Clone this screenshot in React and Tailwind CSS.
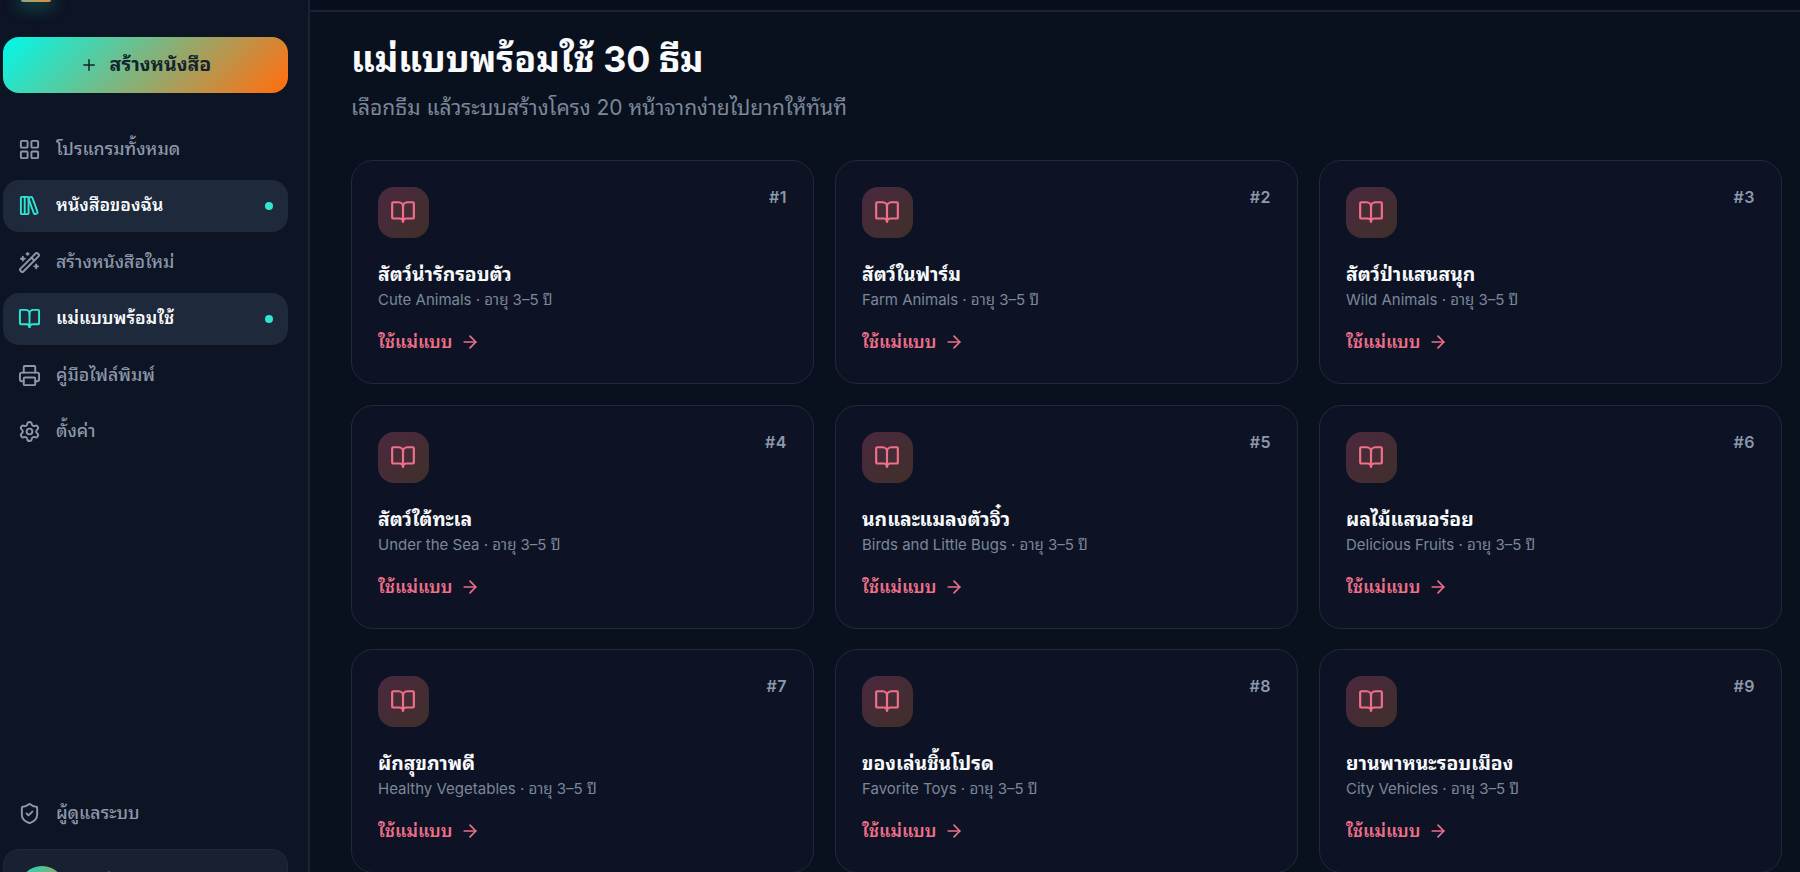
import {
  ArrowRight,
  BookOpen,
  LayoutGrid,
  LibraryBig,
  Plus,
  Printer,
  Settings,
  ShieldCheck,
  WandSparkles
} from "lucide-react";
import clsx from "clsx";

const NAV_ITEMS = [
  { label: "โปรแกรมทั้งหมด", icon: LayoutGrid },
  { label: "หนังสือของฉัน", icon: LibraryBig, active: true },
  { label: "สร้างหนังสือใหม่", icon: WandSparkles },
  { label: "แม่แบบพร้อมใช้", icon: BookOpen, active: true },
  { label: "คู่มือไฟล์พิมพ์", icon: Printer },
  { label: "ตั้งค่า", icon: Settings }
];

const THEMES = [
  { title: "สัตว์น่ารักรอบตัว", subtitle: "Cute Animals" },
  { title: "สัตว์ในฟาร์ม", subtitle: "Farm Animals" },
  { title: "สัตว์ป่าแสนสนุก", subtitle: "Wild Animals" },
  { title: "สัตว์ใต้ทะเล", subtitle: "Under the Sea" },
  { title: "นกและแมลงตัวจิ๋ว", subtitle: "Birds and Little Bugs" },
  { title: "ผลไม้แสนอร่อย", subtitle: "Delicious Fruits" },
  { title: "ผักสุขภาพดี", subtitle: "Healthy Vegetables" },
  { title: "ของเล่นชิ้นโปรด", subtitle: "Favorite Toys" },
  { title: "ยานพาหนะรอบเมือง", subtitle: "City Vehicles" }
];

function NavItem({ label, icon: Icon, active }) {
  return (
    <a
      className={clsx(
        "flex h-[52px] items-center gap-[15px] rounded-2xl px-[15px] text-[17.7px] whitespace-nowrap",
        active ? "bg-[#1e293b] font-semibold text-slate-50" : "font-medium text-[#8c98ab]"
      )}
    >
      <Icon className={clsx("h-[23px] w-[23px] shrink-0", active && "text-[#2fe6d2]")} />
      <span className="flex-1">{label}</span>
      {active ? <span className="h-2 w-2 rounded-full bg-[#2fe6d2]" /> : null}
    </a>
  );
}

function ThemeCard({ number, title, subtitle }) {
  return (
    <article className="h-[224px] rounded-[22px] border border-[#1f2a3a] bg-[#0d1324] p-[26px]">
      <div className="flex items-start justify-between">
        <div className="flex h-[51px] w-[51px] items-center justify-center rounded-2xl bg-linear-to-br from-[#4b2840] to-[#3f2f29] pr-px pb-px text-[#f0708a]">
          <BookOpen className="h-[26px] w-[26px]" />
        </div>
        <span className="text-base leading-5 font-semibold tracking-[0.03em] text-[#8c98ab]">#{number}</span>
      </div>
      <h2 className="mt-[22px] text-[19.3px] leading-7 font-bold text-slate-50">{title}</h2>
      <p className="text-[15px] leading-6 text-[#7b879a]">{subtitle} · อายุ 3–5 ปี</p>
      <div className="mt-[18px] flex items-center gap-2 text-[17.7px] leading-6 font-semibold text-[#ee6f89]">
        <span>ใช้แม่แบบ</span>
        <ArrowRight className="h-5 w-5" />
      </div>
    </article>
  );
}

export default function App() {
  return (
    <div className="flex h-[872px] w-[1800px] overflow-hidden bg-[#0a111e] font-['Inter','Noto_Sans_Thai_Looped','Noto_Looped_Thai','Loma','Noto_Sans_Thai','Noto_Sans',sans-serif]">
      <aside className="flex w-[310px] shrink-0 flex-col border-r-2 border-[#1a2333] bg-[#0d1423] pr-5 pl-[3px]">
        <div className="flex h-[37px] shrink-0 items-start pl-[18px]">
          <div className="h-[2px] w-[30px] rounded-b-xl bg-linear-to-r from-[#7fae7c] to-[#e08a3a] shadow-[0_2px_16px_4px_rgba(45,212,191,0.3)]" />
        </div>
        <button className="flex h-[56px] shrink-0 items-center justify-center gap-3 rounded-2xl bg-[linear-gradient(135deg,#0df2df_5%,#f97316_95%)] text-[19.5px] font-bold text-[#14242e]">
          <Plus className="h-[18px] w-[18px]" />
          สร้างหนังสือ
        </button>
        <nav className="mt-[30px] flex flex-col gap-[4.5px]">
          {NAV_ITEMS.map((item) => (
            <NavItem key={item.label} {...item} />
          ))}
        </nav>
        <div className="mt-auto shrink-0">
          <NavItem label="ผู้ดูแลระบบ" icon={ShieldCheck} />
          <div className="mt-[10px] flex h-[23px] gap-3.5 overflow-hidden rounded-t-2xl border border-b-0 border-[#1d2939] bg-[#172131] px-[15px] pt-4">
            <div className="h-[46px] w-[46px] shrink-0 rounded-full bg-[linear-gradient(135deg,#16e0c4,#f97316)]" />
            <span className="text-base leading-6 font-semibold text-slate-50">sanid</span>
          </div>
        </div>
      </aside>

      <div className="flex flex-1 flex-col">
        <header className="h-3 shrink-0 border-b-2 border-[#1a2333] bg-[#080e1d]" />
        <main className="flex-1 pt-[26px] pr-[18px] pl-[41px]">
          <h1 className="text-[35.8px] leading-[42px] font-bold text-slate-50">แม่แบบพร้อมใช้ 30 ธีม</h1>
          <p className="mt-3 text-[21px] leading-8 text-[#7b879a]">
            เลือกธีม แล้วระบบสร้างโครง 20 หน้าจากง่ายไปยากให้ทันที
          </p>
          <section className="mt-9 grid grid-cols-3 gap-x-[21px] gap-y-[20.5px]">
            {THEMES.map((theme, index) => (
              <ThemeCard key={theme.title} number={index + 1} {...theme} />
            ))}
          </section>
        </main>
      </div>
    </div>
  );
}
